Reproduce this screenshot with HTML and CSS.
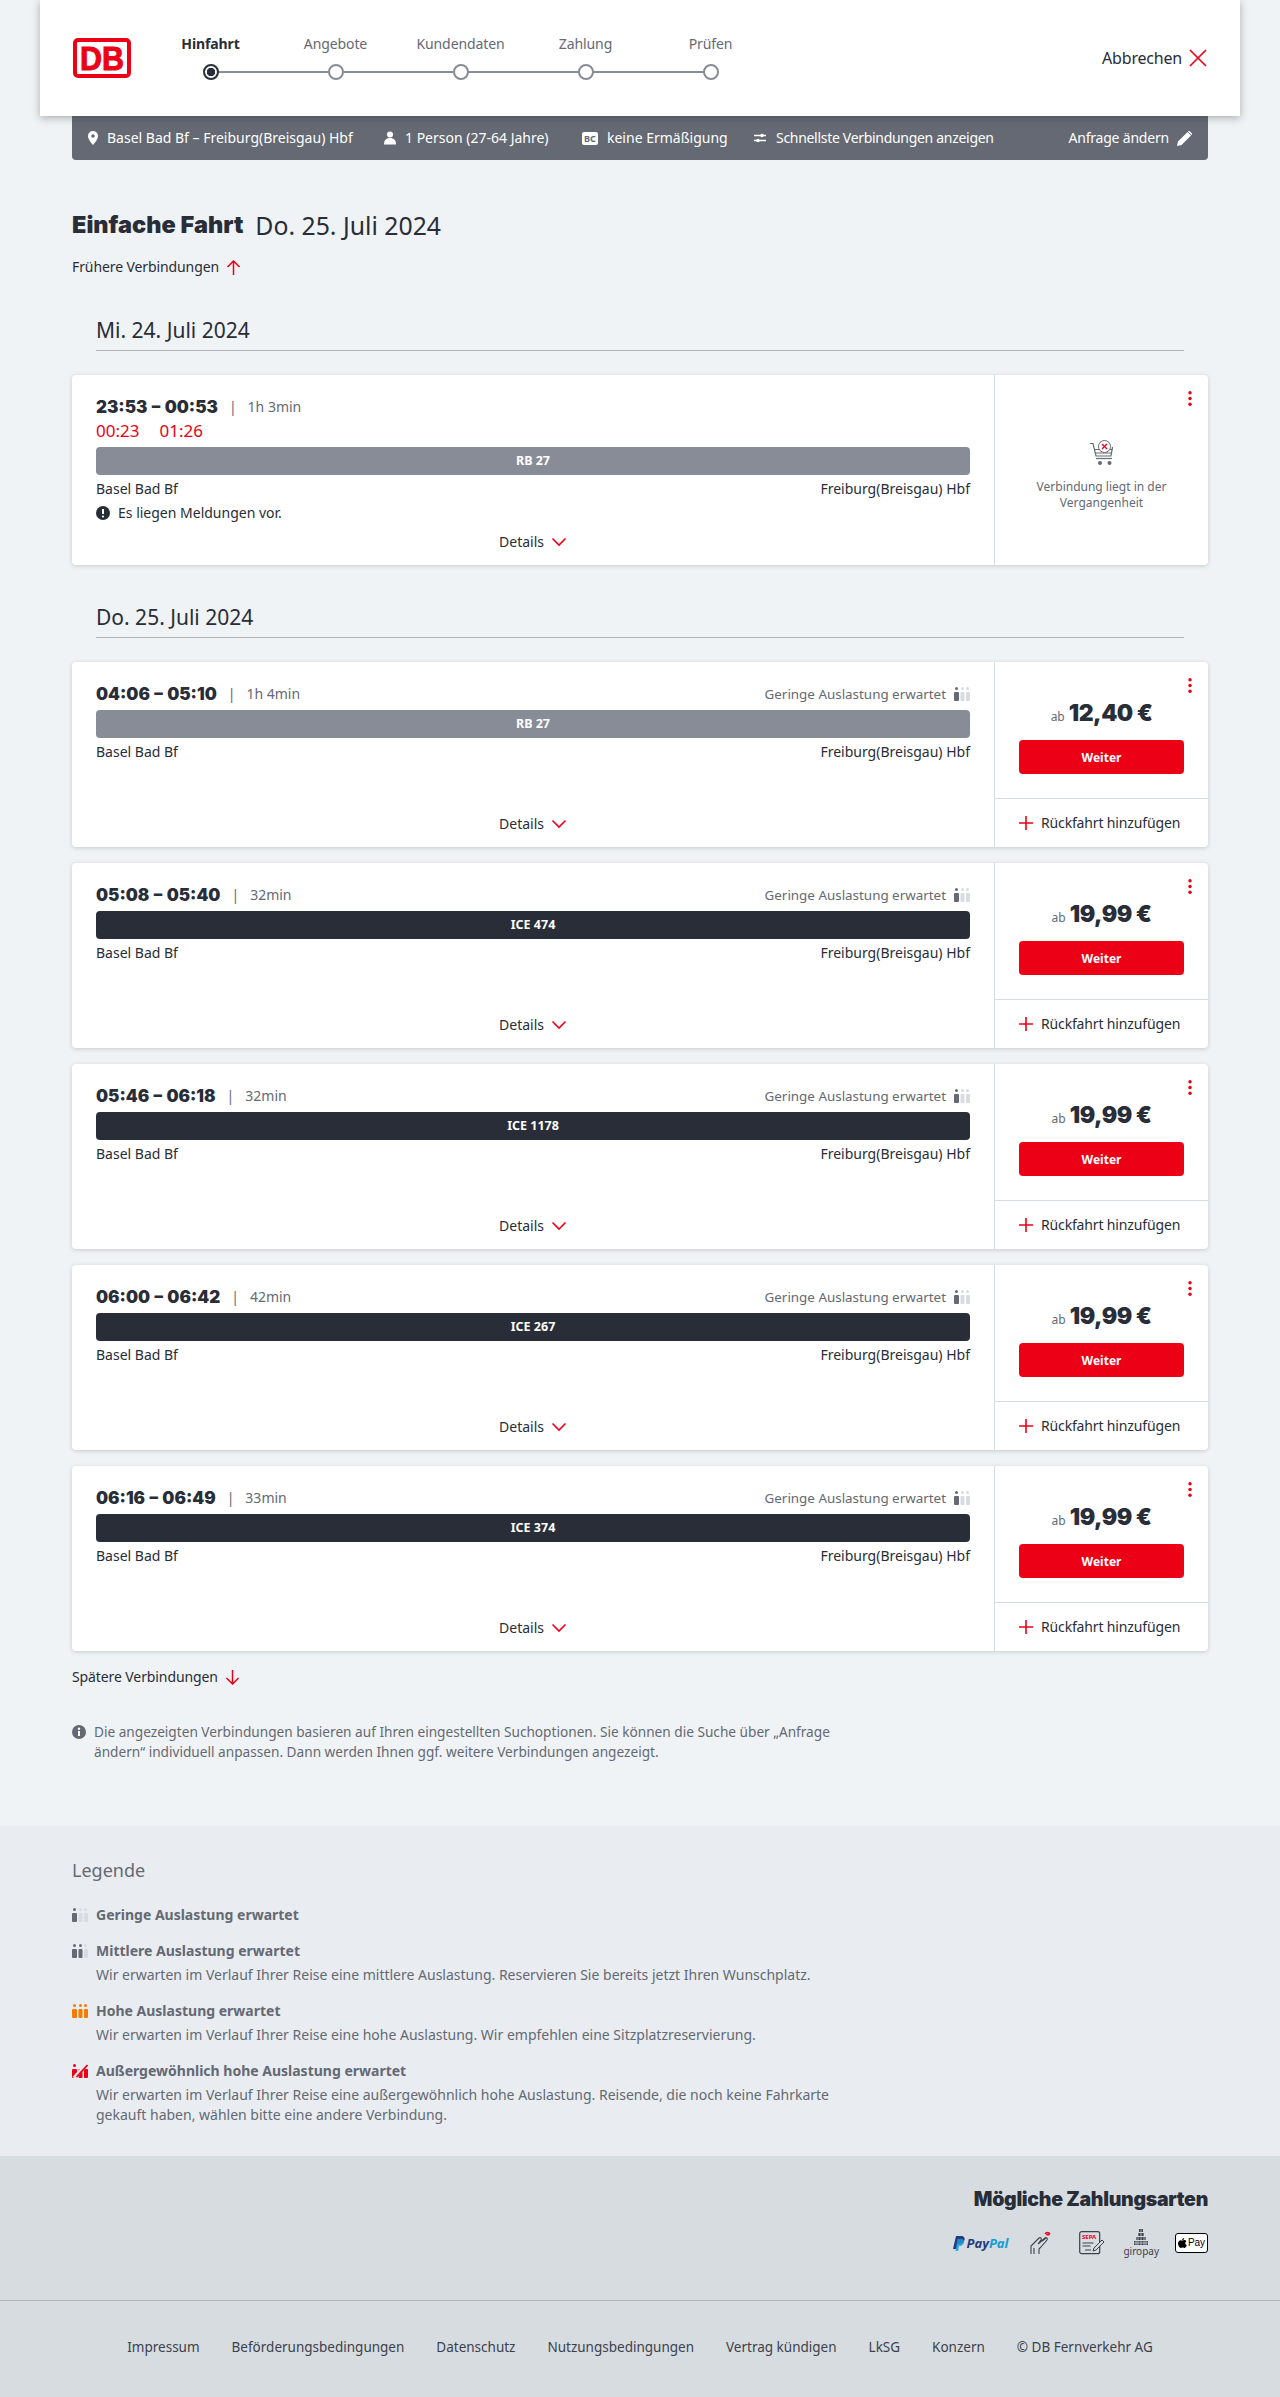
FILE: index.html
```html
<!DOCTYPE html>
<html lang="de">
<head>
  <meta charset="UTF-8" />
  <meta name="viewport" content="width=device-width, initial-scale=1.0"/>
  <title>Angebote | DB</title>
  <link rel="stylesheet" href="styles.css">
</head>
<body>
  <!-- Wiederverwendete Icons -->
  <svg class="sprites" width="0" height="0" aria-hidden="true">
    <symbol id="i-chevron" viewBox="0 0 16 10"><path d="M1.5 1.5 8 8l6.5-6.5" fill="none" stroke="currentColor" stroke-width="1.6"/></symbol>
    <symbol id="i-plus" viewBox="0 0 14 14"><path d="M7 0v14M0 7h14" fill="none" stroke="currentColor" stroke-width="1.6"/></symbol>
    <symbol id="i-kebab" viewBox="0 0 4 15"><circle cx="2" cy="1.7" r="1.7"/><circle cx="2" cy="7.5" r="1.7"/><circle cx="2" cy="13.3" r="1.7"/></symbol>
    <symbol id="i-load" viewBox="0 0 16 14">
      <circle cx="2.5" cy="1.6" r="1.5" fill="var(--p1)"/><rect x="0" y="5" width="5" height="9" rx="1" fill="var(--p1)"/>
      <circle cx="8.5" cy="1.6" r="1.5" fill="var(--p2)"/><rect x="6.5" y="5" width="4" height="9" rx="1" fill="var(--p2)"/>
      <circle cx="13.5" cy="1.6" r="1.5" fill="var(--p3)"/><rect x="12" y="5" width="4" height="9" rx="1" fill="var(--p3)"/>
    </symbol>
  </svg>

  <header class="topbar">
    <div class="logo">
      <svg width="58" height="40" viewBox="0 0 58 40"><rect x="2" y="2" width="54" height="36" rx="3" fill="#fff" stroke="#ec0016" stroke-width="4"/><text x="29" y="32" text-anchor="middle" textLength="44" lengthAdjust="spacingAndGlyphs" class="logo-text">DB</text></svg>
    </div>
    <ol class="stepper">
      <li class="step active"><span class="step-label">Hinfahrt</span><span class="step-dot"></span></li>
      <li class="step"><span class="step-label">Angebote</span><span class="step-dot"></span></li>
      <li class="step"><span class="step-label">Kundendaten</span><span class="step-dot"></span></li>
      <li class="step"><span class="step-label">Zahlung</span><span class="step-dot"></span></li>
      <li class="step"><span class="step-label">Prüfen</span><span class="step-dot"></span></li>
    </ol>
    <a class="cancel">Abbrechen
      <svg width="18" height="18" viewBox="0 0 18 18"><path d="M1 1l16 16M17 1 1 17" fill="none" stroke="#ec0016" stroke-width="1.7"/></svg>
    </a>
  </header>

  <div class="summary">
    <span class="summary-item s-route">
      <svg width="10" height="14" viewBox="0 0 10 14"><path fill="#fff" fill-rule="evenodd" d="M5 0a5 5 0 0 1 5 5c0 3.2-3 6.6-5 9-2-2.4-5-5.800-5-9a5 5 0 0 1 5-5Zm0 3.200a1.800 1.800 0 1 0 0 3.600 1.800 1.800 0 0 0 0-3.600Z"/></svg>
      Basel Bad Bf – Freiburg(Breisgau) Hbf</span>
    <span class="summary-item s-person">
      <svg width="12" height="14" viewBox="0 0 12 14"><circle cx="6" cy="3.500" r="3" fill="#fff"/><path fill="#fff" d="M0 13c0-3.500 2-6 6-6s6 2.500 6 6v.500H0Z"/></svg>
      1 Person (27-64 Jahre)</span>
    <span class="summary-item s-card">
      <span class="bc-icon">BC</span>
      keine Ermäßigung</span>
    <span class="summary-item s-fast">
      <svg width="12" height="10" viewBox="0 0 12 10"><path d="M0 2.500h12M0 7.500h12" stroke="#fff" stroke-width="1.500"/><circle cx="8" cy="2.500" r="1.800" fill="#fff"/><circle cx="4" cy="7.500" r="1.800" fill="#fff"/></svg>
      Schnellste Verbindungen anzeigen</span>
    <a class="summary-edit">Anfrage ändern
      <svg width="15" height="15" viewBox="0 0 15 15"><path fill="#fff" d="M0 15l1-4.500L10.500 1 14 4.500 4.500 14ZM11.500 0l1-.000 2.500 2.500v1l-.500.500L11 .500Z"/></svg>
    </a>
  </div>

  <main class="results">
    <h1 class="title"><strong>Einfache Fahrt</strong> <span>Do. 25. Juli 2024</span></h1>

    <a class="more more-up">Frühere Verbindungen
      <svg width="15" height="15" viewBox="0 0 15 15"><path d="M7.500 15V1M1.500 7l6-6 6 6" fill="none" stroke="#ec0016" stroke-width="1.500"/></svg>
    </a>

    <h2 class="day">Mi. 24. Juli 2024</h2>

    <article class="card">
      <div class="card-main">
        <div class="times"><b>23:53 – 00:53</b><i>|</i><span>1h 3min</span></div>
        <div class="delay"><span>00:23</span><span>01:26</span></div>
        <div class="train regional">RB 27</div>
        <div class="stations"><span>Basel Bad Bf</span><span>Freiburg(Breisgau) Hbf</span></div>
        <div class="notice">
          <svg width="14" height="14" viewBox="0 0 14 14"><circle cx="7" cy="7" r="7" fill="#282d37"/><path d="M7 3v5" stroke="#fff" stroke-width="2"/><circle cx="7" cy="10.500" r="1.100" fill="#fff"/></svg>
          Es liegen Meldungen vor.</div>
        <a class="details details-tight">Details <svg class="chev"><use href="#i-chevron"/></svg></a>
      </div>
      <div class="card-side past">
        <svg class="kebab"><use href="#i-kebab"/></svg>
        <svg class="cart" width="26" height="26" viewBox="0 0 26 26">
          <path d="M1 3.500h3l3 12.500h15l1.500-9" fill="none" stroke="#646973" stroke-width="1.200"/>
          <path d="M5.500 9.500h18M6.500 13h16.500" fill="none" stroke="#646973" stroke-width="1"/>
          <path d="M7 18.500h16" stroke="#646973" stroke-width="1.200"/>
          <circle cx="11" cy="23" r="2" fill="#646973"/><circle cx="20.500" cy="23" r="2" fill="#646973"/>
          <circle cx="15.500" cy="6.500" r="6" fill="#fff" stroke="#646973"/>
          <path d="M13 4l5 5M18 4l-5 5" stroke="#ec0016" stroke-width="1.300"/>
        </svg>
        <p>Verbindung liegt in der Vergangenheit</p>
      </div>
    </article>

    <h2 class="day">Do. 25. Juli 2024</h2>

    <article class="card">
      <div class="card-main">
        <div class="times"><b>04:06 – 05:10</b><i>|</i><span>1h 4min</span><em class="load">Geringe Auslastung erwartet <svg class="load-low"><use href="#i-load"/></svg></em></div>
        <div class="train regional">RB 27</div>
        <div class="stations"><span>Basel Bad Bf</span><span>Freiburg(Breisgau) Hbf</span></div>
        <a class="details">Details <svg class="chev"><use href="#i-chevron"/></svg></a>
      </div>
      <div class="card-side">
        <div class="offer">
          <svg class="kebab"><use href="#i-kebab"/></svg>
          <div class="price"><small>ab</small> 12,40 €</div>
          <button class="btn-next">Weiter</button>
        </div>
        <a class="add-return"><svg class="plus"><use href="#i-plus"/></svg>Rückfahrt hinzufügen</a>
      </div>
    </article>

    <article class="card">
      <div class="card-main">
        <div class="times"><b>05:08 – 05:40</b><i>|</i><span>32min</span><em class="load">Geringe Auslastung erwartet <svg class="load-low"><use href="#i-load"/></svg></em></div>
        <div class="train">ICE 474</div>
        <div class="stations"><span>Basel Bad Bf</span><span>Freiburg(Breisgau) Hbf</span></div>
        <a class="details">Details <svg class="chev"><use href="#i-chevron"/></svg></a>
      </div>
      <div class="card-side">
        <div class="offer">
          <svg class="kebab"><use href="#i-kebab"/></svg>
          <div class="price"><small>ab</small> 19,99 €</div>
          <button class="btn-next">Weiter</button>
        </div>
        <a class="add-return"><svg class="plus"><use href="#i-plus"/></svg>Rückfahrt hinzufügen</a>
      </div>
    </article>

    <article class="card">
      <div class="card-main">
        <div class="times"><b>05:46 – 06:18</b><i>|</i><span>32min</span><em class="load">Geringe Auslastung erwartet <svg class="load-low"><use href="#i-load"/></svg></em></div>
        <div class="train">ICE 1178</div>
        <div class="stations"><span>Basel Bad Bf</span><span>Freiburg(Breisgau) Hbf</span></div>
        <a class="details">Details <svg class="chev"><use href="#i-chevron"/></svg></a>
      </div>
      <div class="card-side">
        <div class="offer">
          <svg class="kebab"><use href="#i-kebab"/></svg>
          <div class="price"><small>ab</small> 19,99 €</div>
          <button class="btn-next">Weiter</button>
        </div>
        <a class="add-return"><svg class="plus"><use href="#i-plus"/></svg>Rückfahrt hinzufügen</a>
      </div>
    </article>

    <article class="card">
      <div class="card-main">
        <div class="times"><b>06:00 – 06:42</b><i>|</i><span>42min</span><em class="load">Geringe Auslastung erwartet <svg class="load-low"><use href="#i-load"/></svg></em></div>
        <div class="train">ICE 267</div>
        <div class="stations"><span>Basel Bad Bf</span><span>Freiburg(Breisgau) Hbf</span></div>
        <a class="details">Details <svg class="chev"><use href="#i-chevron"/></svg></a>
      </div>
      <div class="card-side">
        <div class="offer">
          <svg class="kebab"><use href="#i-kebab"/></svg>
          <div class="price"><small>ab</small> 19,99 €</div>
          <button class="btn-next">Weiter</button>
        </div>
        <a class="add-return"><svg class="plus"><use href="#i-plus"/></svg>Rückfahrt hinzufügen</a>
      </div>
    </article>

    <article class="card">
      <div class="card-main">
        <div class="times"><b>06:16 – 06:49</b><i>|</i><span>33min</span><em class="load">Geringe Auslastung erwartet <svg class="load-low"><use href="#i-load"/></svg></em></div>
        <div class="train">ICE 374</div>
        <div class="stations"><span>Basel Bad Bf</span><span>Freiburg(Breisgau) Hbf</span></div>
        <a class="details">Details <svg class="chev"><use href="#i-chevron"/></svg></a>
      </div>
      <div class="card-side">
        <div class="offer">
          <svg class="kebab"><use href="#i-kebab"/></svg>
          <div class="price"><small>ab</small> 19,99 €</div>
          <button class="btn-next">Weiter</button>
        </div>
        <a class="add-return"><svg class="plus"><use href="#i-plus"/></svg>Rückfahrt hinzufügen</a>
      </div>
    </article>

    <a class="more more-down">Spätere Verbindungen
      <svg width="15" height="15" viewBox="0 0 15 15"><path d="M7.500 0v14M1.500 8l6 6 6-6" fill="none" stroke="#ec0016" stroke-width="1.500"/></svg>
    </a>

    <p class="hint">
      <svg width="14" height="14" viewBox="0 0 14 14"><circle cx="7" cy="7" r="7" fill="#646973"/><circle cx="7" cy="3.700" r="1.200" fill="#fff"/><path d="M7 6v5" stroke="#fff" stroke-width="2"/></svg>
      <span>Die angezeigten Verbindungen basieren auf Ihren eingestellten Suchoptionen. Sie können die Suche über „Anfrage ändern“ individuell anpassen. Dann werden Ihnen ggf. weitere Verbindungen angezeigt.</span>
    </p>
  </main>

  <section class="legend">
    <h3>Legende</h3>
    <div class="legend-item">
      <svg class="load-low"><use href="#i-load"/></svg>
      <div><strong>Geringe Auslastung erwartet</strong></div>
    </div>
    <div class="legend-item">
      <svg class="load-mid"><use href="#i-load"/></svg>
      <div><strong>Mittlere Auslastung erwartet</strong>
      <p>Wir erwarten im Verlauf Ihrer Reise eine mittlere Auslastung. Reservieren Sie bereits jetzt Ihren Wunschplatz.</p></div>
    </div>
    <div class="legend-item">
      <svg class="load-high"><use href="#i-load"/></svg>
      <div><strong>Hohe Auslastung erwartet</strong>
      <p>Wir erwarten im Verlauf Ihrer Reise eine hohe Auslastung. Wir empfehlen eine Sitzplatzreservierung.</p></div>
    </div>
    <div class="legend-item">
      <svg class="load-full" viewBox="0 0 16 14">
        <circle cx="2.500" cy="1.600" r="1.500"/><rect x="0" y="5" width="5" height="9" rx="1"/>
        <rect x="6.500" y="5" width="4" height="9" rx="1"/><rect x="12" y="5" width="4" height="9" rx="1"/>
        <path d="M2 14 15 0" stroke="#e9edf1" stroke-width="3.500"/><path d="M4.500 13 15.500 1" stroke="#ec0016" stroke-width="1.800"/>
      </svg>
      <div><strong>Außergewöhnlich hohe Auslastung erwartet</strong>
      <p>Wir erwarten im Verlauf Ihrer Reise eine außergewöhnlich hohe Auslastung. Reisende, die noch keine Fahrkarte gekauft haben, wählen bitte eine andere Verbindung.</p></div>
    </div>
  </section>

  <section class="payment">
    <h3>Mögliche Zahlungsarten</h3>
    <div class="pay-icons">
      <span class="pay-paypal">
        <svg width="12" height="15" viewBox="0 0 12 15"><path fill="#253b80" d="M3 0h5c3 0 4 2 3.500 4S9 8 6.500 8H4.500L3.500 13H0Z"/><path fill="#179bd7" d="M4.500 3H9c2 .500 2.500 2 2 3.500S9 10 7 10H6l-.800 5H2.500Z" opacity=".85"/></svg>
        <b>Pay</b><b class="pal">Pal</b>
      </span>
      <svg class="pay-hand" width="22" height="24" viewBox="0 0 22 24" fill="none" stroke="#3c414b" stroke-width="1.100">
        <path d="M1 23v-8l8-8c1.500-1 3 .500 2 2l-3 4 7-6c1.500-1 3 .500 2 2l-6 7-2 2v5"/>
        <path d="M4 23v-6M12 10l4-3"/>
        <path d="M15 3c1-2 4-2 5 0" stroke="#ec0016" stroke-width="1.300"/><ellipse cx="18" cy="3.500" rx="2" ry="1" fill="#ec0016" stroke="none"/>
      </svg>
      <svg class="pay-sepa" width="26" height="24" viewBox="0 0 26 24" fill="none">
        <rect x=".700" y=".700" width="20" height="22" rx="2" stroke="#3c414b" stroke-width="1.200"/>
        <text x="3" y="8" class="sepa-text">SEPA</text>
        <path d="M3.500 12h11M3.500 15h8M6 19h6" stroke="#3c414b"/>
        <path d="M14 20l1-3 8-8 2 2-8 8Z" fill="#d7dce1" stroke="#3c414b"/>
      </svg>
      <span class="pay-giro">
        <svg width="16" height="16" viewBox="0 0 16 16"><path fill="#3c414b" d="M6 0h4v3H6ZM5 4h6v3H5ZM3 8h10v3H3ZM1 12h14v4H1Z"/><path stroke="#d7dce1" stroke-width=".700" d="M8 0v16M5 4v12M11 4v12M3 8v8M13 8v8M0 11.500h16M0 14h16"/></svg>
        <span>giropay</span>
      </span>
      <span class="pay-apple">
        <svg width="9" height="11" viewBox="0 0 9 11"><path d="M6.200 0c.100 1-.800 2.200-2 2.100C4.100 1 5.100.100 6.200 0ZM4.400 2.600c.500 0 1.100-.500 2-.500.800 0 1.600.400 2 1.100-1.700 1-1.400 3.400.400 4-.400 1.200-1.400 2.800-2.400 2.800-.700 0-1-.400-1.800-.400s-1.100.400-1.800.400C1.500 10 0 7.700 0 5.600c0-2 1.300-3.400 2.700-3.400.700 0 1.300.400 1.700.400Z" fill="#000"/></svg>Pay
      </span>
    </div>
  </section>

  <footer class="site-footer">
    <a>Impressum</a>
    <a>Beförderungsbedingungen</a>
    <a>Datenschutz</a>
    <a>Nutzungsbedingungen</a>
    <a>Vertrag kündigen</a>
    <a>LkSG</a>
    <a>Konzern</a>
    <span>© DB Fernverkehr AG</span>
  </footer>
</body>
</html>
```

FILE: styles.css
```css
/* Farben */
:root {
  --page: #f0f3f5;
  --ink: #282d37;
  --grey: #646973;
  --train-grey: #878c96;
  --red: #ec0016;
  --line: #d7dce1;
  --p1: #646973;
  --p2: #d7dce1;
  --p3: #d7dce1;
  --head: Inter, "Noto Sans", Arial, sans-serif;
}
* { box-sizing: border-box; }
html, body { margin: 0; padding: 0; }
body {
  background: var(--page);
  color: var(--ink);
  font-family: "Noto Sans", Arial, sans-serif;
  font-size: 14px;
  line-height: 20px;
}
a { color: inherit; }
.sprites { position: absolute; }

/* KOPF */
.topbar {
  position: relative;
  z-index: 2;
  display: flex;
  align-items: center;
  height: 116px;
  margin: 0 40px;
  padding: 0 33px 0 33px;
  background: #fff;
  box-shadow: 0 2px 8px rgba(40,45,55,0.35);
}
.logo { display: flex; width: 58px; height: 40px; }
.logo-text {
  fill: var(--red);
  stroke: var(--red);
  stroke-width: 1px;
  font-family: "Liberation Sans", Arial, sans-serif;
  font-size: 34px;
  font-weight: bold;
}
.stepper {
  display: flex;
  align-self: flex-start;
  list-style: none;
  margin: 34px 0 0 17px;
  padding: 0;
}
.step {
  position: relative;
  display: flex;
  flex-direction: column;
  align-items: center;
  gap: 10px;
  width: 125px;
  color: var(--grey);
  letter-spacing: -0.1px;
}
.step::after {
  content: "";
  position: absolute;
  left: 50%;
  top: 37px;
  width: 125px;
  height: 2px;
  background: var(--train-grey);
}
.step:last-child::after { display: none; }
.step-dot {
  position: relative;
  z-index: 1;
  width: 16px;
  height: 16px;
  background: #fff;
  border: 2px solid var(--train-grey);
  border-radius: 50%;
}
.step.active { color: var(--ink); font-weight: bold; }
.step.active .step-dot {
  border-color: var(--ink);
  background: radial-gradient(circle, var(--ink) 0 4px, #fff 4.5px);
}
.cancel {
  display: flex;
  align-items: center;
  gap: 7px;
  margin-left: auto;
  font-size: 16px;
  letter-spacing: -0.2px;
}

/* SUCHANGABEN */
.summary {
  position: relative;
  display: flex;
  align-items: center;
  height: 44px;
  margin: 0 72px;
  padding: 0 16px;
  background: var(--grey);
  color: #fff;
  border-radius: 0 0 4px 4px;
}
.summary-item { display: flex; align-items: center; }
.summary-item svg, .bc-icon { flex: none; margin-right: 9px; }
.s-route { width: 296px; }
.s-person { width: 198px; }
.s-card { width: 172px; }
.s-fast { letter-spacing: -0.3px; }
.s-fast svg { margin-right: 10px; }
.bc-icon {
  display: inline-block;
  width: 16px;
  height: 13px;
  background: #fff;
  color: var(--grey);
  border-radius: 2px;
  font-size: 9px;
  font-weight: bold;
  line-height: 13px;
  text-align: center;
}
.summary-edit {
  display: flex;
  align-items: center;
  gap: 8px;
  margin-left: auto;
  letter-spacing: -0.2px;
}

/* ERGEBNISSE */
.results { padding: 50px 72px 64px; }
.title {
  display: flex;
  gap: 12px;
  margin: 0;
  font-size: 24.8px;
  font-weight: normal;
  line-height: 30px;
}
.title strong {
  font-family: var(--head);
  font-size: 23.5px;
  font-weight: 900;
  letter-spacing: 0;
}
.more {
  display: flex;
  align-items: center;
  gap: 7px;
  letter-spacing: -0.1px;
}
.more-up { margin-top: 17px; }
.more-down { margin-top: 16px; }
.day {
  margin: 39px 24px 24px;
  padding-bottom: 6px;
  border-bottom: 1px solid #afb4bb;
  font-size: 21px;
  font-weight: normal;
  line-height: 28px;
}
.card + .day { margin-top: 38px; }

.card {
  display: flex;
  background: #fff;
  border-radius: 4px;
  box-shadow: 0 1px 4px rgba(40,45,55,0.2);
}
.card + .card { margin-top: 16px; }
.card-main {
  display: flex;
  flex-direction: column;
  width: 923px;
  padding: 22px 24px 13px 24px;
  border-right: 1px solid var(--line);
}
.times { display: flex; align-items: center; color: var(--grey); }
.times b {
  color: var(--ink);
  font-family: var(--head);
  font-size: 17px;
  font-weight: 900;
  word-spacing: 1px;
}
.times i { margin: 0 11px; font-style: normal; }
.load {
  display: flex;
  align-items: center;
  gap: 8px;
  margin-left: auto;
  font-size: 13.4px;
  font-style: normal;
}
.load svg, .legend-item svg { width: 16px; height: 14px; }
.load-low { --p1: #646973; --p2: #d7dce1; --p3: #d7dce1; }
.load-mid { --p1: #646973; --p2: #646973; --p3: #d7dce1; }
.load-high { --p1: #f57c00; --p2: #f57c00; --p3: #f57c00; }
.load-full { fill: var(--red); }
.delay {
  display: flex;
  gap: 20px;
  margin-top: 4px;
  color: var(--red);
  font-size: 17px;
}
.train {
  height: 28px;
  margin-top: 6px;
  background: var(--ink);
  border-radius: 4px;
  color: #fff;
  font-size: 12.5px;
  font-weight: bold;
  line-height: 28px;
  text-align: center;
}
.train.regional { background: var(--train-grey); }
.stations {
  display: flex;
  justify-content: space-between;
  margin-top: 4px;
}
.notice {
  display: flex;
  align-items: center;
  gap: 8px;
  margin-top: 4px;
}
.details {
  display: flex;
  justify-content: center;
  align-items: center;
  gap: 7px;
  margin-top: auto;
}
.details-tight { margin-top: 9px; }
.chev { width: 16px; height: 10px; color: var(--red); }

/* PREIS */
.card-side {
  position: relative;
  display: flex;
  flex-direction: column;
  width: 213px;
  min-height: 185px;
}
.kebab {
  position: absolute;
  top: 16px;
  right: 16px;
  width: 4px;
  height: 15px;
  fill: var(--red);
}
.offer {
  height: 137px;
  padding: 36px 24px 0;
  border-bottom: 1px solid var(--line);
}
.price {
  color: var(--ink);
  font-family: var(--head);
  font-size: 23px;
  font-weight: 900;
  letter-spacing: -0.5px;
  line-height: 30px;
  text-align: center;
}
.price small {
  color: var(--grey);
  font-family: "Noto Sans", Arial, sans-serif;
  font-size: 12px;
  font-weight: normal;
  letter-spacing: 0;
  line-height: 1;
}
.btn-next {
  display: block;
  width: 100%;
  height: 34px;
  margin-top: 12px;
  background: var(--red);
  border: 0;
  border-radius: 4px;
  color: #fff;
  font-family: inherit;
  font-size: 12px;
  font-weight: bold;
}
.add-return {
  display: flex;
  align-items: center;
  gap: 8px;
  flex: 1;
  padding-left: 24px;
  letter-spacing: -0.15px;
}
.plus { width: 14px; height: 14px; color: var(--red); }
.past {
  align-items: center;
  padding-top: 65px;
  color: var(--grey);
  font-size: 12px;
  line-height: 16px;
  text-align: center;
}
.past p { width: 150px; margin: 13px 0 0; }
.cart { display: block; }

.hint {
  display: flex;
  gap: 8px;
  width: 770px;
  margin: 35px 0 0;
  color: var(--grey);
  font-size: 13.65px;
}
.hint svg { flex: none; margin-top: 3px; }

/* LEGENDE */
.legend {
  height: 330px;
  padding: 30px 72px 0;
  background: #e9edf1;
  color: var(--grey);
}
.legend h3 {
  margin: 0 0 21px;
  font-size: 18px;
  font-weight: normal;
  line-height: 28px;
}
.legend-item { display: flex; gap: 8px; margin-top: 16px; width: 770px; }
.legend-item svg { flex: none; margin-top: 3px; }
.legend-item strong { display: block; font-weight: bold; }
.legend-item p { margin: 4px 0 0; }

/* ZAHLUNG */
.payment {
  height: 144px;
  padding: 31px 72px 0;
  background: var(--line);
}
.payment h3 {
  margin: 0;
  font-family: var(--head);
  font-size: 19.5px;
  font-weight: 900;
  letter-spacing: -0.3px;
  line-height: 24px;
  text-align: right;
}
.pay-icons {
  display: flex;
  justify-content: flex-end;
  align-items: center;
  height: 36px;
  margin-top: 14px;
}
.pay-paypal {
  display: flex;
  align-items: center;
  gap: 2px;
  font-size: 13px;
  font-style: italic;
  line-height: 15px;
  color: #253b80;
}
.pay-paypal .pal { color: #179bd7; margin-left: -2px; }
.pay-hand { margin-left: 22px; }
.pay-sepa { margin-left: 27px; }
.sepa-text {
  fill: var(--red);
  font-family: "Noto Sans", sans-serif;
  font-size: 6px;
  font-weight: bold;
}
.pay-giro {
  display: flex;
  flex-direction: column;
  align-items: center;
  margin-left: 18px;
  color: #3c414b;
  font-size: 10px;
  line-height: 13px;
}
.pay-apple {
  display: flex;
  justify-content: center;
  align-items: center;
  gap: 1px;
  width: 33px;
  height: 20px;
  margin-left: 16px;
  background: #fff;
  border: 1px solid #000;
  border-radius: 3px;
  color: #000;
  font-family: "Liberation Sans", Arial, sans-serif;
  font-size: 10px;
}

/* FUSS */
.site-footer {
  display: flex;
  justify-content: center;
  gap: 32px;
  height: 97px;
  padding-top: 36px;
  background: var(--line);
  border-top: 1px solid #afb4bb;
  color: #3c414b;
  font-size: 13.5px;
}
```
